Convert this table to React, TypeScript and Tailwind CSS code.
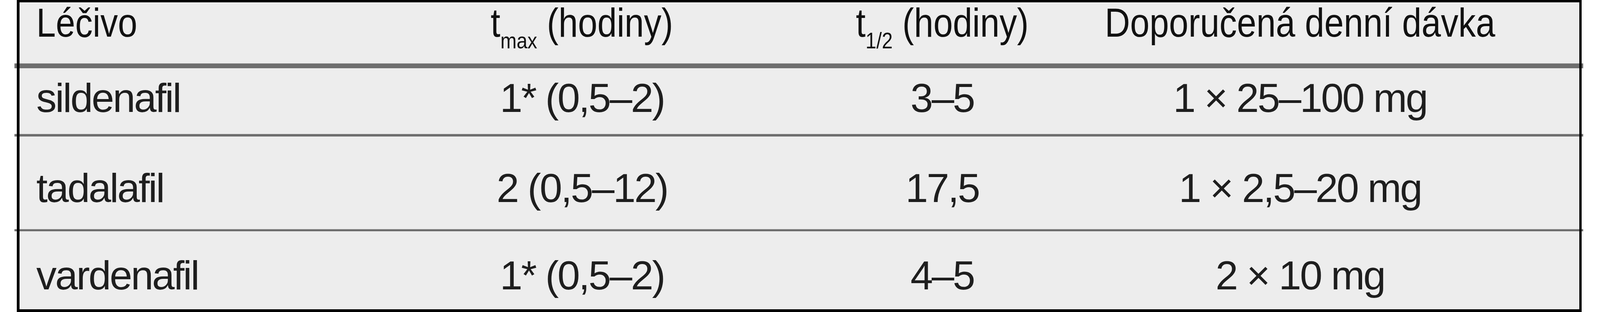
import React from "react";

type Row = {
  name: string;
  tmax: string;
  half: string;
  dose: string;
  box: string;
};

const rows: Row[] = [
  { name: "sildenafil", tmax: "1* (0,5–2)", half: "3–5", dose: "1 × 25–100 mg", box: "h-[168px] pt-[24px]" },
  { name: "tadalafil", tmax: "2 (0,5–12)", half: "17,5", dose: "1 × 2,5–20 mg", box: "h-[237px] pt-[80px]" },
  { name: "vardenafil", tmax: "1* (0,5–2)", half: "4–5", dose: "2 × 10 mg", box: "h-[207px] pt-[61px] border-b-[7px]" },
];

const grid = "grid grid-cols-[980px_920px_924px_908px] items-start";
const cell = "border-l-[7px] border-r-[6px] border-black bg-[#ededed]";
// header face is a condensed grotesque, squeeze the regular one
const narrow = "inline-block shrink-0 whitespace-nowrap scale-x-[0.86]";

// gray rule between rows, the black side borders run through it
const Separator = ({ height }: { height: string }) => (
  <div className={`flex ${height}`}>
    <div className="w-[6px] border-t border-[#c4c4c4] bg-[#6e6e6e]" />
    <div className="w-[7px] bg-black" />
    <div className="flex-1 border-t border-[#c4c4c4] bg-[#6e6e6e]" />
    <div className="w-[6px] bg-black" />
    <div className="w-[4px] border-t border-[#c4c4c4] bg-[#6e6e6e]" />
  </div>
);

const Sub = ({ children }: { children: React.ReactNode }) => (
  <span className="text-[58px] align-[-30px]">{children}</span>
);

export default function App() {
  return (
    <div className="h-[800px] w-[4113px] overflow-hidden bg-white pl-[37px]">
      <div className="w-[4016px]">
        {/* header */}
        <div className={`ml-[6px] mr-[4px] h-[162px] border-t-[6px] ${cell}`}>
          <div className={`${grid} font-['Liberation_Sans',Arial,sans-serif] text-[104px] leading-none text-[#111]`}>
            <div className="pl-[43px]">
              <span className={`${narrow} origin-left`}>Léčivo</span>
            </div>
            <div className="flex justify-center">
              <span className={narrow}>
                t<Sub>max</Sub> (hodiny)
              </span>
            </div>
            <div className="flex justify-center">
              <span className={narrow}>
                t<Sub>1/2</Sub> (hodiny)
              </span>
            </div>
            <div className="flex justify-center">
              <span className={narrow}>Doporučená denní dávka</span>
            </div>
          </div>
        </div>
        <Separator height="h-[13px]" />
        {rows.map((r, i) => (
          <React.Fragment key={r.name}>
            <div className={`ml-[6px] mr-[4px] ${r.box} ${cell}`}>
              <div className={`${grid} font-['Liberation_Sans',Arial,sans-serif] text-[104px] leading-none tracking-[-0.035em] text-[#1e1e1e]`}>
                <div className="pl-[43px]">{r.name}</div>
                <div className="text-center whitespace-nowrap">{r.tmax}</div>
                <div className="text-center whitespace-nowrap">{r.half}</div>
                <div className="text-center whitespace-nowrap">{r.dose}</div>
              </div>
            </div>
            {i === 0 && <Separator height="h-[7px]" />}
            {i === 1 && <Separator height="h-[6px]" />}
          </React.Fragment>
        ))}
      </div>
    </div>
  );
}
